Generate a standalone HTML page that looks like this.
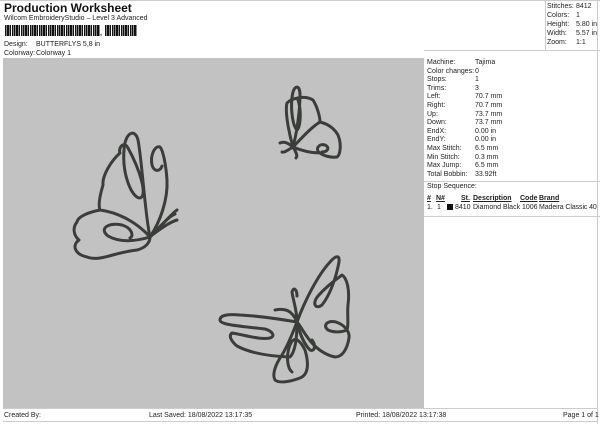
<!DOCTYPE html>
<html><head><meta charset="utf-8"><style>
body{margin:0;width:600px;height:424px;background:#fff;font-family:"Liberation Sans",sans-serif;color:#222;position:relative;overflow:hidden}
.a{position:absolute;font-size:7px;line-height:8px;white-space:nowrap}
.t{position:absolute;left:4px;top:1px;font-size:12px;font-weight:bold;color:#111}
.canvas{position:absolute;left:3px;top:58px;width:421px;height:350px;background:#c2c2c2}
.bc{position:absolute;left:5px;top:25px;width:95px;height:11px;background:repeating-linear-gradient(90deg,#111 0 1.5px,#fff 1.5px 2.2px,#111 2.2px 4px,#fff 4px 4.7px,#111 4.7px 6px,#fff 6px 7px,#111 7px 8.5px,#fff 8.5px 9px)}
.bc2{left:105px;width:32px}
.hl{position:absolute;height:1px;background:#ccc}
.vl{position:absolute;width:1px;background:#ccc}
u{text-decoration:underline}
</style></head><body>
<div class="t">Production Worksheet</div>
<div class="a" style="left:4px;top:15px">Wilcom EmbroideryStudio – Level 3 Advanced</div>
<div class="bc"></div><div class="bc bc2"></div>
<div class="a" style="left:100px;top:30px;font-weight:bold">,</div>
<div class="a" style="left:4px;top:41px">Design:</div><div class="a" style="left:36px;top:41px">BUTTERFLYS 5,8 in</div>
<div class="a" style="left:4px;top:50px">Colorway:</div><div class="a" style="left:36px;top:50px">Colorway 1</div>
<div class="hl" style="left:0;top:0;width:600px"></div>
<div class="vl" style="left:545px;top:0;height:50px"></div>
<div class="hl" style="left:424px;top:50px;width:176px"></div>
<div class="vl" style="left:597px;top:0;height:424px"></div>
<div class="a" style="left:547px;top:3px">Stitches:</div><div class="a" style="left:576px;top:3px">8412</div>
<div class="a" style="left:547px;top:12px">Colors:</div><div class="a" style="left:576px;top:12px">1</div>
<div class="a" style="left:547px;top:21px">Height:</div><div class="a" style="left:576px;top:21px">5.80 in</div>
<div class="a" style="left:547px;top:30px">Width:</div><div class="a" style="left:576px;top:30px">5.57 in</div>
<div class="a" style="left:547px;top:39px">Zoom:</div><div class="a" style="left:576px;top:39px">1:1</div>
<div class="canvas"></div>
<div class="a" style="left:427px;top:59px;line-height:8.6px">Machine:<br>Color changes:<br>Stops:<br>Trims:<br>Left:<br>Right:<br>Up:<br>Down:<br>EndX:<br>EndY:<br>Max Stitch:<br>Min Stitch:<br>Max Jump:<br>Total Bobbin:</div>
<div class="a" style="left:475px;top:59px;line-height:8.6px">Tajima<br>0<br>1<br>3<br>70.7 mm<br>70.7 mm<br>73.7 mm<br>73.7 mm<br>0.00 in<br>0.00 in<br>6.5 mm<br>0.3 mm<br>6.5 mm<br>33.92ft</div>
<div class="hl" style="left:424px;top:181px;width:176px"></div>
<div class="a" style="left:427px;top:183px">Stop Sequence:</div>
<div class="a" style="left:427px;top:195px;font-weight:bold"><u>#</u></div>
<div class="a" style="left:436px;top:195px;font-weight:bold"><u>N#</u></div>
<div class="a" style="left:461px;top:195px;font-weight:bold"><u>St.</u></div>
<div class="a" style="left:473px;top:195px;font-weight:bold"><u>Description</u></div>
<div class="a" style="left:520px;top:195px;font-weight:bold"><u>Code</u></div>
<div class="a" style="left:539px;top:195px;font-weight:bold"><u>Brand</u></div>
<div class="a" style="left:427px;top:204px">1.</div><div class="a" style="left:437px;top:204px">1</div>
<div style="position:absolute;left:447px;top:204px;width:6px;height:6px;background:#111"></div>
<div class="a" style="left:455px;top:204px">8410</div>
<div class="a" style="left:473px;top:204px">Diamond Black</div>
<div class="a" style="left:522px;top:204px">1006</div>
<div class="a" style="left:539px;top:204px;letter-spacing:-0.1px">Madeira Classic 40</div>
<div class="hl" style="left:424px;top:216px;width:176px"></div>
<div class="hl" style="left:3px;top:408px;width:594px"></div>
<div class="hl" style="left:3px;top:421px;width:594px"></div>
<div class="a" style="left:4px;top:412px">Created By:</div>
<div class="a" style="left:149px;top:412px">Last Saved: 18/08/2022 13:17:35</div>
<div class="a" style="left:356px;top:412px">Printed: 18/08/2022 13:17:38</div>
<div class="a" style="left:563px;top:412px">Page 1 of 1</div>
<svg style="position:absolute;left:0;top:0" width="600" height="424" fill="none" stroke="#3b3d3b" stroke-width="3" stroke-linecap="round" stroke-linejoin="round">
<path d="M150,237 C145,215 142,160 138,140 C135,128 125,132 124,150 C122,175 132,198 140,198 C148,196 140,170 128,148 C124,140 118,148 120,153 C112,160 102,175 103,185 C100,195 98,205 100,210 C90,212 78,216 77,222 C72,228 74,236 79,240 C72,245 74,254 87,257 C100,262 115,252 137,250 C145,248 150,243 150,237 C140,240 122,244 108,236 C98,228 110,222 122,225 C132,228 134,236 130,238"/>
<path d="M100,210 C115,212 135,220 150,237"/>
<path d="M150,237 C160,222 168,200 167,180 C166,165 163,150 160,147 C155,145 150,155 152,165 C154,172 160,172 162,166"/>
<path d="M150,237 C160,228 170,215 177,210 M152,235 C162,228 170,222 177,220 M154,233 C162,224 170,216 175,214"/>
<path d="M293,147 C297,132 300,110 300,95 C300,85 295,85 293,92 C290,105 292,125 297,130 C300,128 302,112 298,100 M293,147 C288,130 285,110 287,103 C292,98 305,95 313,100 C318,108 320,118 320,122 C328,124 334,128 338,135 C342,145 340,155 337,157 C330,158 322,155 320,153 C315,150 318,143 325,145 C330,147 328,152 322,152"/>
<path d="M320,122 C310,128 300,140 293,147 C300,150 310,153 320,153 M293,147 C288,143 284,141 280,143 M293,147 C288,150 284,153 282,152 M293,147 C296,152 298,156 296,158"/>
<path d="M297,322 C305,300 318,275 330,262 C336,255 340,255 339,262 C336,278 330,295 322,305 C315,310 312,303 318,296 C325,288 335,280 342,275 C347,278 350,290 348,305 C347,315 349,325 347,330 C340,333 332,332 328,330 C322,325 328,320 336,322 C345,325 350,332 349,338 C347,350 342,357 335,357 C325,355 315,348 308,338 C302,330 300,325 297,322"/>
<path d="M297,322 C297,310 293,300 292,292 C294,286 297,290 297,296"/>
<path d="M297,322 C285,320 260,316 240,315 C228,314 220,315 220,320 C220,325 240,326 265,329 C272,331 276,336 270,338 C260,340 245,335 232,333 C228,336 232,342 237,346 C248,352 265,356 290,357 C295,352 297,340 297,322"/>
<path d="M297,322 C292,310 285,308 275,310 M297,322 C292,335 288,345 282,355 C275,365 272,375 275,380 C280,384 292,381 300,378 C310,374 308,360 305,350 C300,340 294,335 290,345 C286,355 287,368 292,372"/>
<path d="M297,322 C300,335 305,345 310,350 C315,352 316,345 312,340"/>
</svg>
</body></html>
